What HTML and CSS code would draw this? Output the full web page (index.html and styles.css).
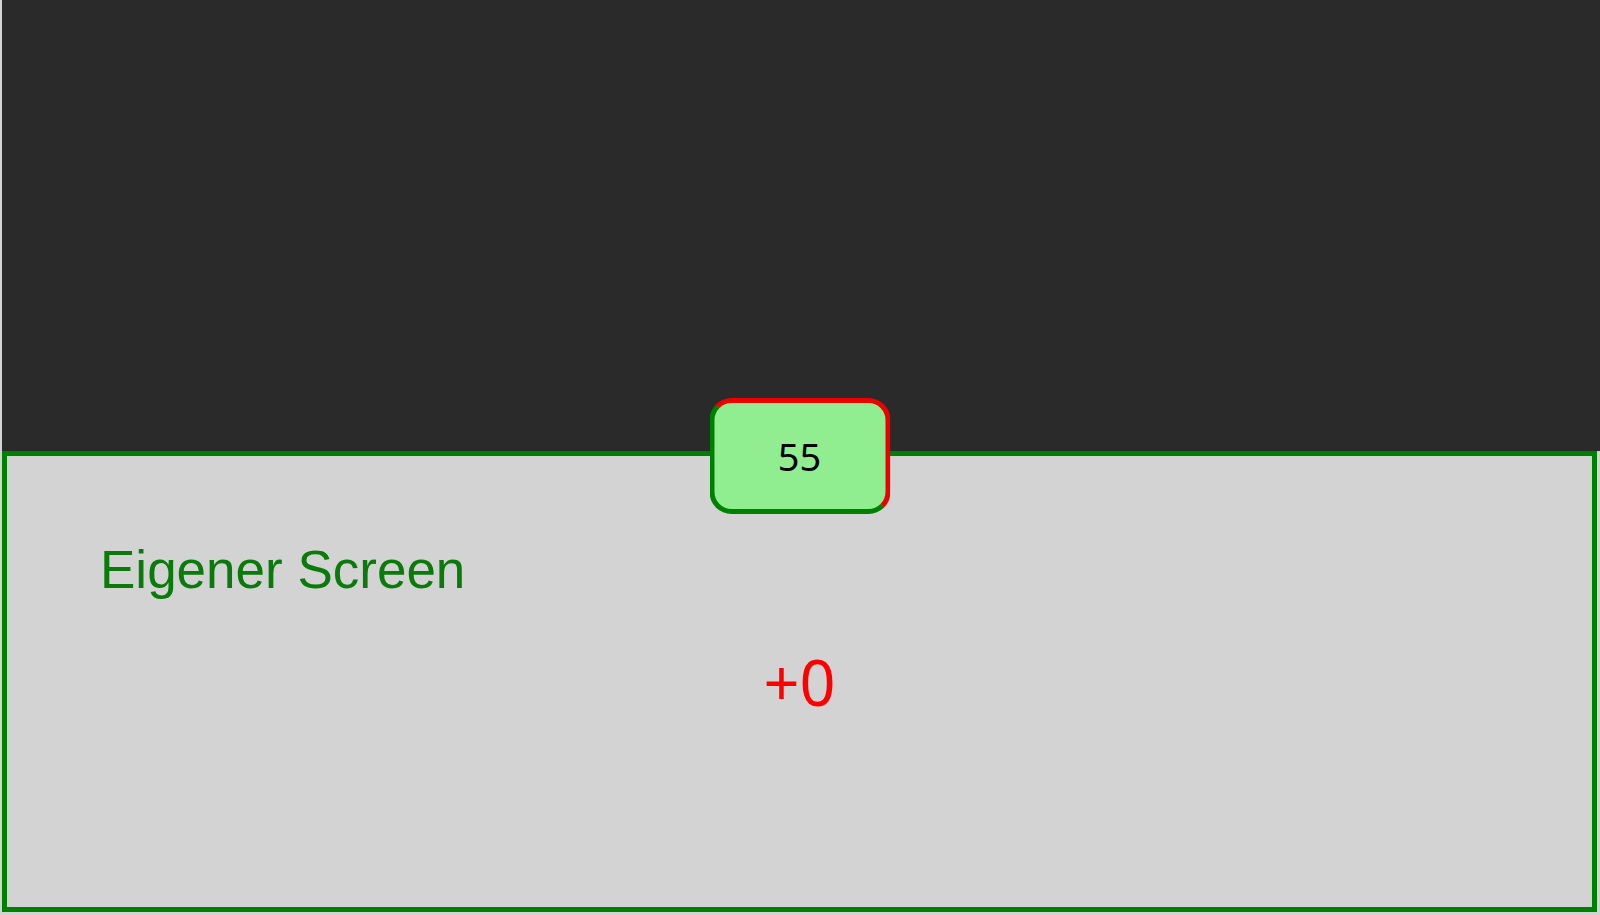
FILE: index.html
```html
<!DOCTYPE html>
<html lang="de">
<head>
<meta charset="utf-8">
<title>Eigener Screen</title>
<link rel="stylesheet" href="styles.css">
</head>
<body>
<div class="app">
  <div class="stage"></div>
  <section class="panel">
    <div class="badge">55</div>
    <h1 class="title">Eigener Screen</h1>
    <div class="delta">+0</div>
  </section>
</div>
</body>
</html>
```
FILE: styles.css
```css
html, body {
  margin: 0;
  padding: 0;
  background: #d3d3d3;
}
body {
  width: 1600px;
  height: 915px;
  overflow: hidden;
}
.app {
  margin-left: 2px;
  height: 915px;
  display: flex;
  flex-direction: column;
  background: #d3d3d3;
}
.stage {
  flex: 1;
  background: #2a2a2a;
}
.panel {
  position: relative;
  height: 461px;
  box-sizing: border-box;
  margin: 0 3px 3px 0;
  border: 5px solid #008000;
  background: #d3d3d3;
  display: grid;
  grid-template: 1fr / 1fr;
}
.badge {
  position: absolute;
  left: 50%;
  top: -58px;
  transform: translateX(-50%);
  width: 181px;
  height: 116px;
  box-sizing: border-box;
  border: 5px solid;
  border-color: #ee0000 #ee0000 #008000 #008000;
  border-radius: 22px;
  background: #90ee90;
  display: flex;
  align-items: center;
  justify-content: center;
  font-family: "Noto Sans", sans-serif;
  font-size: 38px;
  color: #000;
}
.title {
  grid-area: 1 / 1;
  align-self: start;
  justify-self: start;
  margin: 87px 0 0 93px;
  font-family: "Liberation Sans", Arial, sans-serif;
  font-weight: normal;
  font-size: 53px;
  line-height: 1;
  color: #0a7a0a;
}
.delta {
  grid-area: 1 / 1;
  align-self: center;
  justify-self: center;
  font-family: "Noto Sans", sans-serif;
  font-size: 63px;
  line-height: 1;
  color: #ff0000;
}
```
